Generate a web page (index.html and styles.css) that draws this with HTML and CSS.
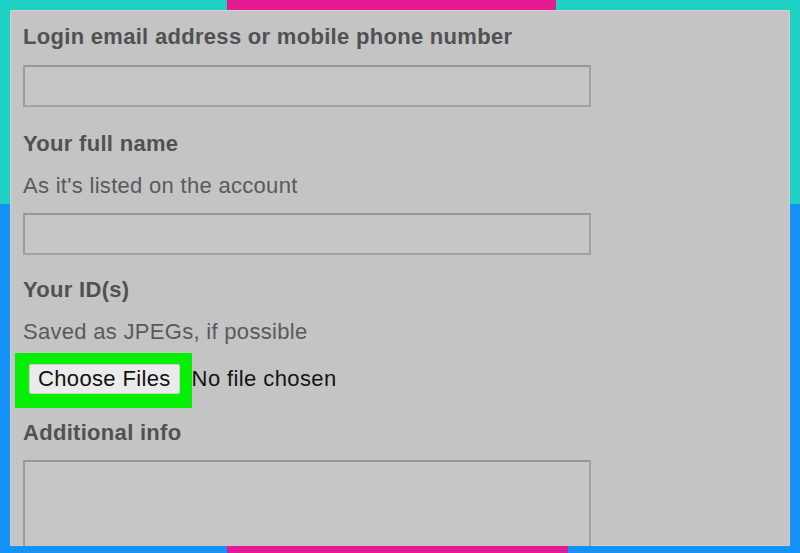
FILE: index.html
```html
<!DOCTYPE html>
<html lang="en">
<head>
<meta charset="utf-8">
<title>Identity form</title>
<link rel="stylesheet" href="styles.css">
</head>
<body>
<div class="frame">
  <form class="panel">
    <div class="field field-login">
      <label class="title">Login email address or mobile phone number</label>
      <input class="text-input" type="text">
    </div>
    <div class="field field-name">
      <label class="title">Your full name</label>
      <p class="hint">As it's listed on the account</p>
      <input class="text-input after-hint" type="text">
    </div>
    <div class="field field-ids">
      <label class="title">Your ID(s)</label>
      <p class="hint">Saved as JPEGs, if possible</p>
      <div class="file-row">
        <span class="highlight"><button class="choose" type="button">Choose Files</button></span>
        <span class="nofile">No file chosen</span>
      </div>
    </div>
    <div class="field field-info">
      <label class="title">Additional info</label>
      <textarea class="text-area"></textarea>
    </div>
  </form>
</div>
</body>
</html>
```
FILE: styles.css
```css
html, body {
  margin: 0;
  padding: 0;
}
body {
  width: 800px;
  height: 553px;
  overflow: hidden;
  font-family: "Liberation Sans", Arial, sans-serif;
}
.frame {
  box-sizing: border-box;
  width: 800px;
  height: 553px;
  padding: 10px 10px 7px 10px;
  display: flex;
  background:
    linear-gradient(#e51a93, #e51a93) 227px 0 / 329px 10px no-repeat,
    linear-gradient(#e51a93, #e51a93) 227px 546px / 341px 7px no-repeat,
    linear-gradient(to bottom, #1fd1c5 0, #1fd1c5 204px, #1592f6 204px, #1592f6 100%);
}
.panel {
  flex: 1;
  margin: 0;
  box-sizing: border-box;
  background: #c4c4c4;
  box-shadow: inset 0 0 0 1px #cfcfcf;
  padding: 14px 13px 0 13px;
  display: flex;
  flex-direction: column;
  overflow: hidden;
}
.field {
  display: flex;
  flex-direction: column;
  align-items: flex-start;
}
.field-name {
  margin-top: 24px;
}
.field-ids {
  margin-top: 22px;
}
.field-info {
  margin-top: 12px;
}
.title {
  display: block;
  font-size: 22px;
  line-height: 26px;
  font-weight: bold;
  letter-spacing: 0.3px;
  color: #515153;
}
.hint {
  margin: 16px 0 0 0;
  font-size: 22px;
  line-height: 26px;
  letter-spacing: 0.3px;
  color: #5a5a5c;
}
.text-input {
  box-sizing: border-box;
  width: 568px;
  height: 42px;
  margin: 15px 0 0 0;
  background: #c6c6c6;
  border: 2px solid #a2a2a2;
  border-top-color: #979797;
  border-left-color: #9c9c9c;
  padding: 0;
  outline: none;
}
.text-input.after-hint {
  margin-top: 14px;
}
.file-row {
  display: flex;
  align-items: baseline;
  margin-top: 8px;
}
.highlight {
  display: inline-flex;
  margin-left: -8px;
  padding: 11px 12px 14px 14px;
  background: #05ee05;
}
.choose {
  box-sizing: border-box;
  height: 30px;
  margin: 0;
  padding: 0 8px;
  font-family: "Liberation Sans", Arial, sans-serif;
  font-size: 22px;
  line-height: 28px;
  letter-spacing: 0.35px;
  color: #111111;
  background: #ebebeb;
  border: 1px solid #cfcfcf;
  border-radius: 2px;
}
.nofile {
  font-size: 22px;
  line-height: 26px;
  letter-spacing: 0.4px;
  color: #141414;
}
.text-area {
  box-sizing: border-box;
  width: 568px;
  height: 110px;
  margin: 14px 0 0 0;
  background: #c6c6c6;
  border: 2px solid #a2a2a2;
  border-top-color: #979797;
  border-left-color: #9c9c9c;
  padding: 0;
  resize: none;
  outline: none;
  flex-shrink: 0;
}
```
